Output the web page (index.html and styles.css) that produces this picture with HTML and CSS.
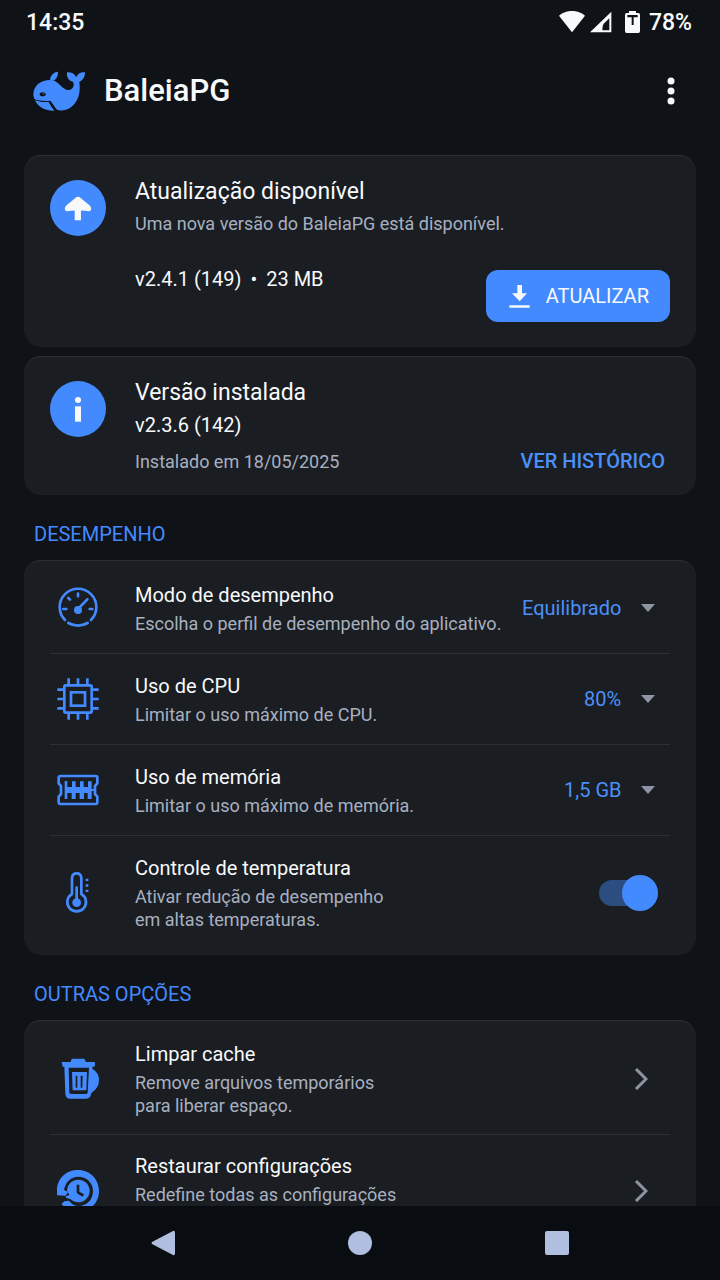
FILE: index.html
```html
<!DOCTYPE html>
<html lang="pt-BR">
<head>
  <meta charset="UTF-8">
  <meta name="viewport" content="width=device-width, initial-scale=1.0">
  <title>BaleiaPG</title>
  <link rel="stylesheet" href="styles.css">
</head>
<body>
  <div class="status-bar">
    <span class="hora">14:35</span>
    <div class="status-icons">
      <svg class="wifi" viewBox="0 0 78 66" width="26" height="22"><path d="M0 14 C22 -5 56 -5 78 14 L39 64 Z"/></svg>
      <svg class="sinal" viewBox="0 0 66 66" width="22" height="22"><path fill-rule="evenodd" d="M0 64 L64 2 V64 Z M37 58 H58 V22 L41 38 Q36 44 37 58 Z"/></svg>
      <svg class="bateria" viewBox="0 0 45 66" width="15" height="22"><path fill-rule="evenodd" d="M12 0 H33 V6 H40 Q45 6 45 11 V61 Q45 66 40 66 H5 Q0 66 0 61 V11 Q0 6 5 6 H12 Z M7 12 V19 H20 V42 H26 V19 H38 V12 Z"/></svg>
      <span>78%</span>
    </div>
  </div>

  <header class="app-bar">
    <svg class="logo" viewBox="0 0 156 120" width="52" height="40">
      <path d="M1 72 C1 43 24 27 51 27 C76 27 81 49 100 56 C115 60 127 48 120 32 C107 29 100 20 102 4 C115 3 126 9 130 19 C133 9 143 2 156 4 C156 19 148 29 139 33 C143 63 137 87 119 104 C105 117 86 121 73 117 C65 109 61 99 52 89 C37 91 19 90 4 84 Z"/>
      <path d="M6 88 C20 93 38 94 47 93 C52 102 57 111 64 119 C41 120 17 112 6 88 Z"/>
      <path d="M51 26 C53 12 62 3 75 2 C75 15 70 26 60 29 Z"/>
      <ellipse class="furo" cx="29" cy="70" rx="9" ry="6"/>
      <circle cx="32" cy="68" r="2"/>
    </svg>
    <h1>BaleiaPG</h1>
    <button class="menu-btn" type="button" aria-label="Menu">
      <svg viewBox="0 0 8 28" width="8" height="28"><circle cx="4" cy="4" r="3.5"/><circle cx="4" cy="14" r="3.5"/><circle cx="4" cy="24" r="3.5"/></svg>
    </button>
  </header>

  <main>
    <section class="card info">
      <div class="circulo">
        <svg viewBox="0 0 84 76" width="28" height="25"><path d="M42 2 Q46 2 50 6 L77 28 Q83 34 82 40 Q81 46 75 46 Q62 44 51 44 V74 H32 V44 Q22 44 9 46 Q3 46 2 40 Q1 34 7 28 L34 6 Q38 2 42 2 Z"/></svg>
      </div>
      <div class="info-texto">
        <h2>Atualização disponível</h2>
        <p class="desc">Uma nova versão do BaleiaPG está disponível.</p>
        <div class="linha-update">
          <p class="versao"><span>v2.4.1 (149)</span><span>•</span><span>23 MB</span></p>
          <button class="btn-atualizar" type="button">
            <svg viewBox="0 0 63 69" width="21" height="23"><path d="M25 0 H39 V25 H54 L32 49 L9 25 H25 Z M1 61 H62 V68 H1 Z"/></svg>
            ATUALIZAR
          </button>
        </div>
      </div>
    </section>

    <section class="card info instalada">
      <div class="circulo">
        <svg viewBox="0 0 24 75" width="8" height="25"><circle cx="12" cy="9" r="9"/><path d="M3 28 H21 V74 H3 Z"/></svg>
      </div>
      <div class="info-texto">
        <h2>Versão instalada</h2>
        <p class="versao">v2.3.6 (142)</p>
        <div class="linha-historico">
          <p class="desc">Instalado em 18/05/2025</p>
          <a class="link-historico" href="#historico">VER HISTÓRICO</a>
        </div>
      </div>
    </section>

    <h3>DESEMPENHO</h3>
    <section class="card lista">
      <div class="item">
        <svg class="icone" viewBox="0 0 126 126" width="42" height="42">
          <g class="traco">
            <path d="M24 99 A55 55 0 1 1 102 99"/>
            <path d="M34 108 Q63 124 92 108"/>
            <path d="M63 20 V28 M34 33 L39 38 M19 66 H28 M98 66 H106 M63 66 L91 37"/>
          </g>
          <circle cx="63" cy="69" r="12"/>
        </svg>
        <div class="texto">
          <label for="modo">Modo de desempenho</label>
          <p class="desc">Escolha o perfil de desempenho do aplicativo.</p>
        </div>
        <div class="seletor">
          <select id="modo"><option>Equilibrado</option></select>
          <svg viewBox="0 0 14 8" width="14" height="8"><path d="M0 0 H14 L7 8 Z"/></svg>
        </div>
      </div>

      <div class="item">
        <svg class="icone" viewBox="0 0 126 126" width="42" height="42">
          <g class="traco quadrado">
            <rect x="22" y="22" width="82" height="82" rx="4"/>
            <rect x="42" y="43" width="42" height="40"/>
            <path d="M35 1 V20 M63 1 V20 M91 1 V20 M35 106 V125 M63 106 V125 M91 106 V125 M1 35 H20 M1 63 H20 M1 91 H20 M106 35 H125 M106 63 H125 M106 91 H125"/>
          </g>
        </svg>
        <div class="texto">
          <label for="cpu">Uso de CPU</label>
          <p class="desc">Limitar o uso máximo de CPU.</p>
        </div>
        <div class="seletor">
          <select id="cpu"><option>80%</option></select>
          <svg viewBox="0 0 14 8" width="14" height="8"><path d="M0 0 H14 L7 8 Z"/></svg>
        </div>
      </div>

      <div class="item">
        <svg class="icone" viewBox="0 0 126 126" width="42" height="42">
          <g class="traco">
            <path d="M10 21 H116 Q121 21 121 26 V43 L114 51 V75 L121 83 V100 Q121 105 116 105 H10 Q5 105 5 100 V83 L12 75 V51 L5 43 V26 Q5 21 10 21 Z"/>
          </g>
          <path d="M23 36 H31 V54 H45 V37 H56 V54 H69 V37 H80 V54 H93 V37 H104 V60 H114 V66 H104 V90 H92 V72 H81 V90 H68 V72 H56 V90 H44 V72 H31 V90 H23 Z"/>
        </svg>
        <div class="texto">
          <label for="memoria">Uso de memória</label>
          <p class="desc">Limitar o uso máximo de memória.</p>
        </div>
        <div class="seletor">
          <select id="memoria"><option>1,5 GB</option></select>
          <svg viewBox="0 0 14 8" width="14" height="8"><path d="M0 0 H14 L7 8 Z"/></svg>
        </div>
      </div>

      <div class="item item-alto">
        <svg class="icone" viewBox="0 0 126 126" width="42" height="42">
          <g class="traco">
            <path d="M45 18 Q46 4 59 4 Q72 4 73 18 V66 A28 28 0 1 1 45 66 Z"/>
            <path d="M59 47 V90"/>
          </g>
          <circle cx="59" cy="92" r="13"/>
          <path d="M86 20 h8 v7 h-8 Z M86 37 h8 v7 h-8 Z M86 53 h8 v7 h-8 Z"/>
        </svg>
        <div class="texto">
          <label for="temperatura">Controle de temperatura</label>
          <p class="desc">Ativar redução de desempenho<br>em altas temperaturas.</p>
        </div>
        <input class="chave" type="checkbox" id="temperatura" checked>
      </div>
    </section>

    <h3>OUTRAS OPÇÕES</h3>
    <section class="card lista">
      <a class="item item-link" href="#cache">
        <svg class="icone" viewBox="0 0 126 126" width="42" height="42">
          <path d="M43 5 Q44 2 48 2 H79 Q83 2 84 5 L86 12 H111 Q114 12 114 15 V22 Q114 26 110 26 H17 L14 12 H41 Z"/>
          <path fill-rule="evenodd" d="M22 24 H106 V32 Q126 44 126 66 Q126 91 103 105 Q101 122 88 122 H40 Q26 122 25 107 Z M35 29 L37 104 Q38 108 44 108 H85 Q91 108 92 104 L96 29 Z"/>
          <path fill-rule="evenodd" d="M45 42 H90 L88 97 H47 Z M56 53 V89 H61 V53 Z M71 53 V89 H76 L77 53 Z"/>
        </svg>
        <div class="texto">
          <span class="titulo">Limpar cache</span>
          <p class="desc">Remove arquivos temporários<br>para liberar espaço.</p>
        </div>
        <svg class="seta" viewBox="0 0 14 22" width="14" height="22"><path d="M2 1 L12 11 L2 21"/></svg>
      </a>

      <a class="item item-link" href="#restaurar">
        <svg class="icone" viewBox="0 0 126 126" width="42" height="42">
          <path d="M0 76 C-6 33 22 0 63 0 C99 0 126 28 126 63 C126 99 98 126 63 126 C42 126 25 117 14 102 L22 94 L36 92 C45 104 55 108 64 108 C91 108 108 88 108 63 C108 38 88 20 64 20 C42 20 25 36 21 60 L33 66 L26 77 Z"/>
          <path fill-rule="evenodd" d="M30 63 A34 34 0 1 1 41 88 L28 84 L26 79 L37 75 Z M59 44 V67 Q60 70 63 72 L77 80 L81 73 L67 65 V44 Z"/>
        </svg>
        <div class="texto">
          <span class="titulo">Restaurar configurações</span>
          <p class="desc">Redefine todas as configurações</p>
        </div>
        <svg class="seta" viewBox="0 0 14 22" width="14" height="22"><path d="M2 1 L12 11 L2 21"/></svg>
      </a>
    </section>
  </main>

  <nav class="nav-bar">
    <button type="button" aria-label="Voltar"><svg viewBox="0 0 24 26" width="24" height="26"><path d="M22 1 Q24 0 24 3 V23 Q24 26 22 25 L1 14 Q0 13 1 12 Z"/></svg></button>
    <button type="button" aria-label="Início"><svg viewBox="0 0 24 24" width="24" height="24"><circle cx="12" cy="12" r="12"/></svg></button>
    <button type="button" aria-label="Recentes"><svg viewBox="0 0 24 24" width="24" height="24"><rect width="24" height="24" rx="2"/></svg></button>
  </nav>
</body>
</html>
```
FILE: styles.css
```css
* {
  box-sizing: border-box;
}
body {
  margin: 0;
  height: 100vh;
  display: flex;
  flex-direction: column;
  background: #0f1318;
  color: #f8f9fb;
  font-family: Roboto, "Liberation Sans", sans-serif;
}
h1, h2, h3, p {
  margin: 0;
  font-weight: 400;
}
svg {
  display: block;
  flex: none;
  fill: currentColor;
}
button {
  font: inherit;
  color: inherit;
  background: none;
  border: none;
  padding: 0;
  cursor: pointer;
}
a {
  color: inherit;
  text-decoration: none;
}

/* barra de status */
.status-bar {
  display: flex;
  justify-content: space-between;
  align-items: center;
  height: 44px;
  flex: none;
  padding: 0 28px 0 26px;
  font-size: 23px;
  font-weight: 500;
}
.status-icons {
  display: flex;
  align-items: center;
}
.sinal {
  margin-left: 5px;
}
.bateria {
  margin: 0 9px 0 13px;
}

/* cabeçalho */
.app-bar {
  display: flex;
  align-items: center;
  height: 94px;
  flex: none;
  padding: 0 24px 0 33px;
}
.logo {
  color: #448aff;
}
.furo {
  fill: #0f1318;
}
.app-bar h1 {
  flex: 1;
  margin-left: 19px;
  font-size: 31px;
  line-height: 40px;
  font-weight: 500;
}
.menu-btn {
  display: flex;
  justify-content: center;
  align-items: center;
  width: 50px;
  height: 50px;
}

main {
  flex: 1;
  min-height: 0;
  overflow-y: auto;
  scrollbar-width: none;
  padding: 17px 24px 0;
}
.card {
  background: #1a1e23;
  border-top: 1px solid #2c3035;
  border-radius: 17px;
}
.desc {
  color: #a8b0c0;
  font-size: 18px;
  line-height: 23px;
}

/* cartões de versão */
.info {
  display: flex;
  gap: 29px;
  padding: 21px 26px 25px;
}
.circulo {
  display: flex;
  justify-content: center;
  align-items: center;
  flex: none;
  width: 56px;
  height: 56px;
  margin-top: 3px;
  border-radius: 50%;
  background: #448aff;
}
.info-texto {
  flex: 1;
}
.info h2 {
  font-size: 23px;
  line-height: 30px;
}
.info-texto > .desc,
.info-texto > .versao {
  margin-top: 5px;
}
.versao {
  display: flex;
  gap: 9px;
  font-size: 20px;
  line-height: 24px;
}
.linha-update {
  display: flex;
  justify-content: space-between;
  align-items: flex-start;
  margin-top: 32px;
}
.btn-atualizar {
  display: flex;
  align-items: center;
  gap: 16px;
  height: 52px;
  margin-top: 3px;
  padding: 0 21px 0 23px;
  border-radius: 12px;
  background: #448aff;
  font-size: 20px;
}
.instalada {
  margin-top: 9px;
  padding-bottom: 22px;
}
.linha-historico {
  display: flex;
  justify-content: space-between;
  align-items: center;
  margin-top: 12px;
}
.link-historico {
  padding-right: 5px;
  color: #4a90f8;
  font-size: 20px;
  line-height: 24px;
  font-weight: 500;
}

/* listas */
h3 {
  padding: 27px 10px 14px;
  color: #448aff;
  font-size: 20px;
  line-height: 24px;
}
.lista {
  padding: 2px 26px 6px;
}
.item {
  display: flex;
  align-items: center;
  min-height: 91px;
  border-bottom: 1px solid #2c3035;
}
.item:last-child {
  border-bottom: none;
}
.item-alto {
  min-height: 113px;
}
.item-link {
  min-height: 112px;
}
.icone {
  margin: 0 36px 0 7px;
  color: #448aff;
}
.traco {
  fill: none;
  stroke: currentColor;
  stroke-width: 8;
  stroke-linecap: round;
  stroke-linejoin: round;
}
.quadrado {
  stroke-linecap: butt;
  stroke-linejoin: miter;
}
.texto {
  flex: 1;
}
.item-link .texto {
  min-height: 76px;
}
.texto label,
.titulo {
  display: block;
  margin-bottom: 3px;
  font-size: 20px;
  line-height: 27px;
}
.seletor {
  display: flex;
  align-items: center;
  gap: 19px;
  padding-right: 15px;
  color: #8d95a5;
}
.seletor select {
  appearance: none;
  border: none;
  padding: 0;
  background: none;
  color: #4a90f8;
  font: inherit;
  font-size: 20px;
  cursor: pointer;
}
.chave {
  appearance: none;
  display: flex;
  justify-content: flex-end;
  align-items: center;
  width: 59px;
  height: 26px;
  margin: 0 12px 0 0;
  border-radius: 13px;
  background: #2c4d80;
  cursor: pointer;
}
.chave::before {
  content: "";
  width: 36px;
  height: 36px;
  border-radius: 50%;
  background: #448aff;
}
.chave:not(:checked) {
  justify-content: flex-start;
}
.seta {
  margin-right: 22px;
  fill: none;
  stroke: #8d95a5;
  stroke-width: 3;
}

/* navegação do sistema */
.nav-bar {
  display: grid;
  grid-template-columns: repeat(3, 1fr);
  flex: none;
  height: 74px;
  padding: 0 64px;
  background: #090d11;
  color: #b0bfe0;
}
.nav-bar button {
  display: flex;
  justify-content: center;
  align-items: center;
}
```
